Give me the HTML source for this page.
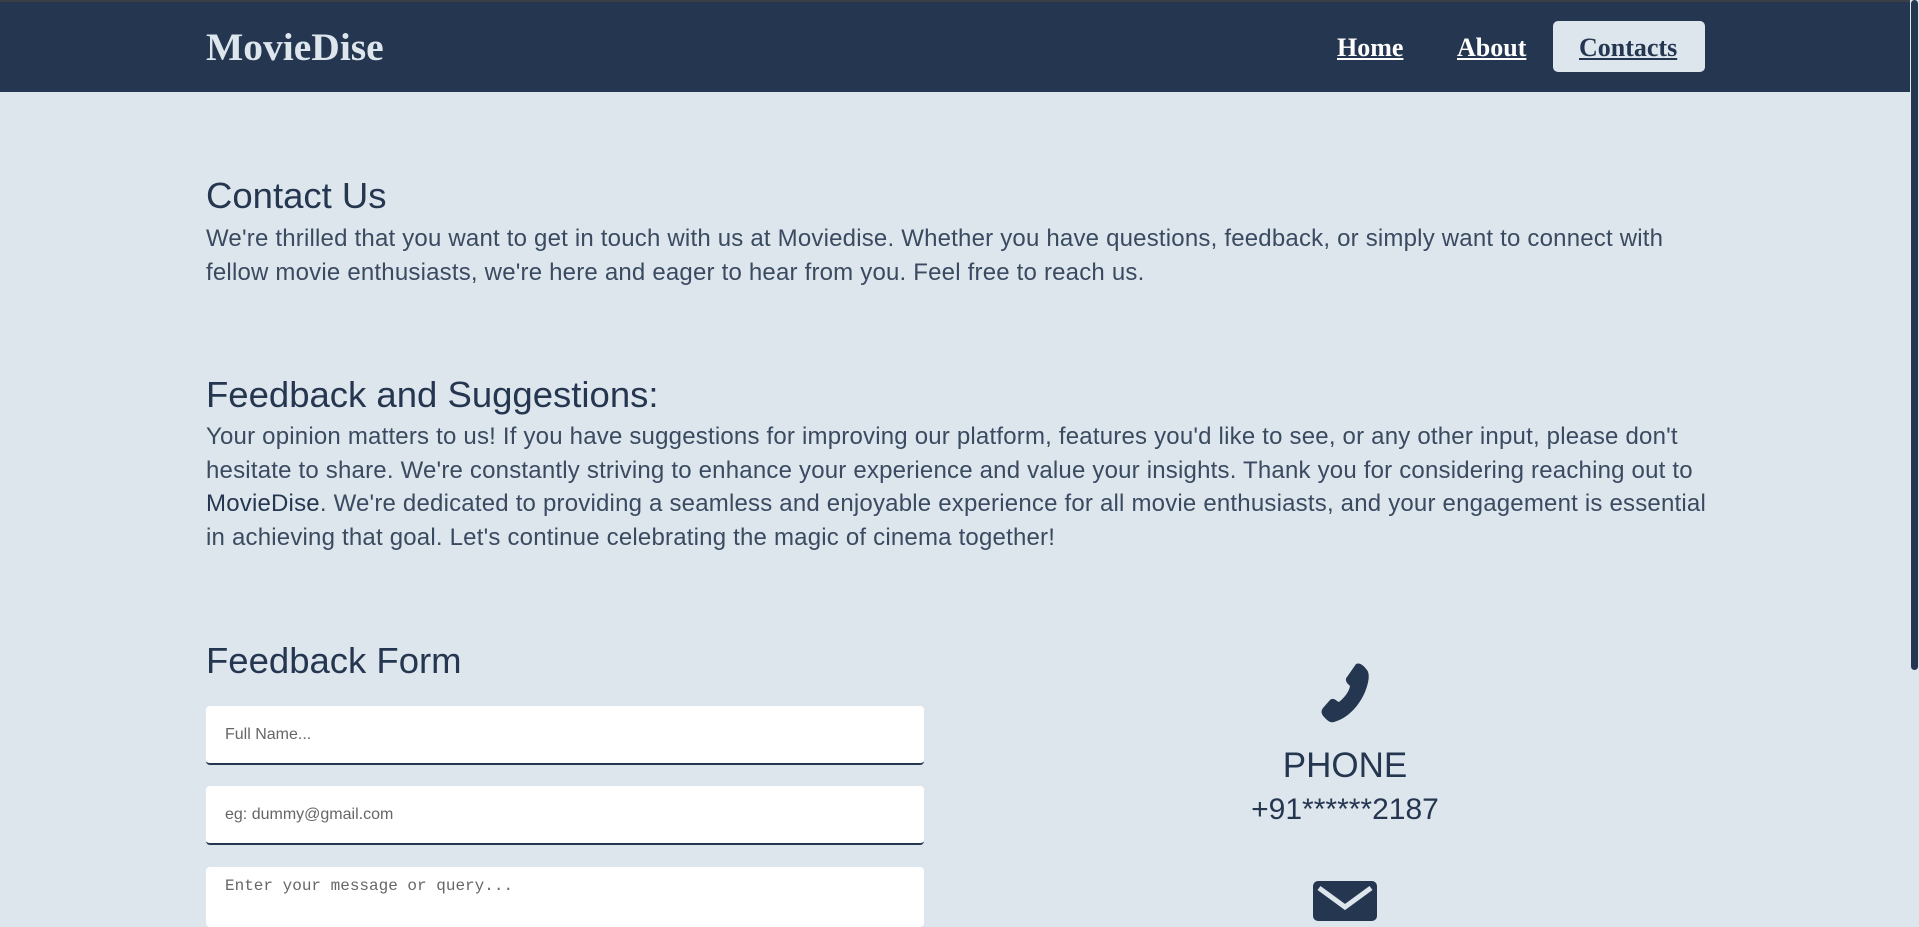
<!DOCTYPE html>
<html><head><meta charset="utf-8"><style>
*{margin:0;padding:0;box-sizing:border-box}
html,body{width:1919px;height:909px;overflow:hidden;background:#dee6ed;font-family:"Liberation Sans",sans-serif;color:#253650}
.hdr{position:absolute;left:0;top:0;width:1910px;height:92px;background:#253650;border-top:2px solid #3a3f47}
.logo{position:absolute;left:206px;top:22px;font-family:"Liberation Serif",serif;font-weight:bold;font-size:39.5px;color:#dee6ed}
.nav a{position:absolute;top:31px;font-family:"Liberation Serif",serif;font-weight:bold;font-size:26px;color:#fff;text-decoration:underline}
.btn{position:absolute;left:1553px;top:19px;width:152px;height:51px;background:#dee6ed;border-radius:5px}
.sb{position:absolute;left:1910px;top:0;width:9px;height:909px;background:#dee6ed}
.sbt{position:absolute;left:1911px;top:0;width:7px;height:670px;background:#253650;border-radius:4px}
h1,h2{position:absolute;left:206px;font-weight:normal;font-size:36.5px}
p{position:absolute;left:206px;width:1510px;font-size:24px;letter-spacing:0.2px;line-height:33.5px;color:#3a4a60}
.in{position:absolute;left:206px;width:718px;height:59px;background:#fff;border-radius:4px;border-bottom:2px solid #253650;font-size:16px;color:#666;padding:20px 19px}
.c{position:absolute;left:1145px;width:400px;text-align:center}
</style></head><body>
<div class="hdr"><div class="logo">MovieDise</div>
<div class="btn"></div>
<div class="nav"><a style="left:1337px">Home</a><a style="left:1457px">About</a><a style="left:1579px;color:#253650">Contacts</a></div></div>
<div class="sb"></div><div class="sbt"></div>
<h1 style="top:175px">Contact Us</h1>
<p style="top:222px">We're thrilled that you want to get in touch with us at Moviedise. Whether you have questions, feedback, or simply want to connect with fellow movie enthusiasts, we're here and eager to hear from you. Feel free to reach us.</p>
<h2 style="top:374px">Feedback and Suggestions:</h2>
<p style="top:420px">Your opinion matters to us! If you have suggestions for improving our platform, features you'd like to see, or any other input, please don't hesitate to share. We're constantly striving to enhance your experience and value your insights. Thank you for considering reaching out to <span style="color:#253650">MovieDise</span>. We're dedicated to providing a seamless and enjoyable experience for all movie enthusiasts, and your engagement is essential in achieving that goal. Let's continue celebrating the magic of cinema together!</p>
<h2 style="top:640px">Feedback Form</h2>
<div class="in" style="top:706px">Full Name...</div>
<div class="in" style="top:786px">eg: dummy@gmail.com</div>
<div class="in" style="top:867px;height:60px;padding:10px 19px;font-family:'Liberation Mono',monospace;font-size:16px;border:none">Enter your message or query...</div>
<svg style="position:absolute;left:1311px;top:662px" width="66" height="62" viewBox="0 0 64 62"><path d="M44 2 C48 0 52 4 55 8 C58 12 57 20 53 30 C47 44 36 56 22 60 C18 61 16 59 13 56 C10 53 8 50 11 46 L18 38 C20 36 23 37 25 39 L27 40 C32 36 37 30 38 24 L36 22 C34 20 33 17 35 15 Z" fill="#253650"/></svg>
<div class="c" style="top:746px;font-size:35px">PHONE</div>
<div class="c" style="top:793px;font-size:30px">+91******2187</div>
<svg style="position:absolute;left:1313px;top:881px" width="64" height="40" viewBox="0 0 64 40"><rect x="0" y="0" width="64" height="40" rx="5" fill="#253650"/><path d="M6 7 L32 26 L58 7" stroke="#dee6ed" stroke-width="5" fill="none"/></svg>
</body></html>
